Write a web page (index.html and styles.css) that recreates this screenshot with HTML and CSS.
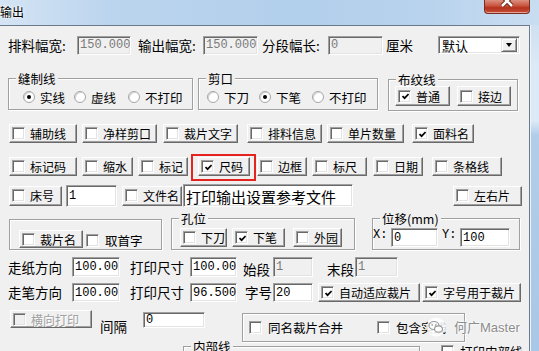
FILE: index.html
```html
<!DOCTYPE html>
<html lang="zh-CN">
<head>
  <meta charset="UTF-8">
  <meta name="viewport" content="width=device-width, initial-scale=1.0">
  <title>输出</title>
  <link rel="stylesheet" href="styles.css">
</head>
<body>

<div class="titlebar">
  <span class="title">输出</span>
  <div class="close">
    <svg width="16" height="10" viewBox="0 0 16 10">
      <path d="M3 -4 L13 6 M13 -4 L3 6" stroke="#6b2419" stroke-width="4.5"/>
      <path d="M3 -4 L13 6 M13 -4 L3 6" stroke="#fff" stroke-width="2.5"/>
    </svg>
  </div>
</div>

<div class="main">
  <div class="client">

    <div class="row r1">
      <span class="lbl w69">排料幅宽:</span>
      <span class="edit dis w54">150.000</span>
      <span class="lbl ml7 w65">输出幅宽:</span>
      <span class="edit dis w55">150.000</span>
      <span class="lbl ml4 w66">分段幅长:</span>
      <span class="edit dis w55">0</span>
      <span class="lbl ml3 w52">厘米</span>
      <div class="combo">
        <span class="combo-val">默认</span>
        <span class="combo-btn"><i class="tri"></i></span>
      </div>
    </div>

    <div class="row r2">
      <fieldset class="group w185">
        <legend>缝制线</legend>
        <div class="group-body pl14">
          <span class="radio"><i class="dot on"></i>实线</span>
          <span class="radio ml9"><i class="dot"></i>虚线</span>
          <span class="radio ml12"><i class="dot"></i>不打印</span>
        </div>
      </fieldset>
      <fieldset class="group ml5 w180">
        <legend>剪口</legend>
        <div class="group-body pl8">
          <span class="radio"><i class="dot"></i>下刀</span>
          <span class="radio ml10"><i class="dot on"></i>下笔</span>
          <span class="radio ml11"><i class="dot"></i>不打印</span>
        </div>
      </fieldset>
      <fieldset class="group grain ml10 w130">
        <legend>布纹线</legend>
        <div class="group-body top pl6">
          <span class="chk h20 w55"><i class="box"><svg class="tick" viewBox="0 0 7 7"><path d="M0.5 3 L2.6 5.2 L6.6 1"/></svg></i>普通</span>
          <span class="chk h20 ml7 w54"><i class="box"></i>接边</span>
        </div>
      </fieldset>
    </div>

    <div class="row r3">
      <span class="chk ml1 w68"><i class="box"></i>辅助线</span>
      <span class="chk ml5 w75"><i class="box"></i>净样剪口</span>
      <span class="chk ml6 w75"><i class="box"></i>裁片文字</span>
      <span class="chk ml9 w75"><i class="box"></i>排料信息</span>
      <span class="chk ml5 w77"><i class="box"></i>单片数量</span>
      <span class="chk ml8 w62"><i class="box"><svg class="tick" viewBox="0 0 7 7"><path d="M0.5 3 L2.6 5.2 L6.6 1"/></svg></i>面料名</span>
    </div>

    <div class="row r4">
      <span class="chk ml1 w68"><i class="box"></i>标记码</span>
      <span class="chk ml5 w51"><i class="box"></i>缩水</span>
      <span class="chk ml5 w50"><i class="box"></i>标记</span>
      <span class="chk marked ml10 w52"><i class="box"><svg class="tick" viewBox="0 0 7 7"><path d="M0.5 3 L2.6 5.2 L6.6 1"/></svg></i>尺码</span>
      <span class="chk ml7 w50"><i class="box"></i>边框</span>
      <span class="chk ml5 w55"><i class="box"></i>标尺</span>
      <span class="chk ml6 w50"><i class="box"></i>日期</span>
      <span class="chk ml9 w70"><i class="box"></i>条格线</span>
    </div>

    <div class="row r5">
      <span class="chk h20 ml1 w53"><i class="box"></i>床号</span>
      <span class="edit h22 ml4 w51">1</span>
      <span class="chk h20 ml5 w60"><i class="box"></i>文件名</span>
      <span class="edit h23 ml1 w170 cjk">打印输出设置参考文件</span>
      <span class="chk h20 ml100 w69"><i class="box"></i>左右片</span>
    </div>

    <div class="row r6">
      <div class="group plain-group ml1 w153">
        <span class="chk h18 w64"><i class="box"></i>裁片名</span>
        <span class="pchk ml3"><i class="box"></i>取首字</span>
      </div>
      <fieldset class="group ml9 w184">
        <legend>孔位</legend>
        <div class="group-body top pt3 pl8">
          <span class="chk w47"><i class="box"></i>下刀</span>
          <span class="chk ml5 w53"><i class="box"><svg class="tick" viewBox="0 0 7 7"><path d="M0.5 3 L2.6 5.2 L6.6 1"/></svg></i>下笔</span>
          <span class="chk ml8 w49"><i class="box"></i>外园</span>
        </div>
      </fieldset>
      <fieldset class="group ml17 w148">
        <legend>位移(mm)</legend>
        <div class="group-body top pt3">
          <span class="lbl mono w18">X:</span>
          <span class="edit w47">0</span>
          <span class="lbl mono ml4 w18">Y:</span>
          <span class="edit w50">100</span>
        </div>
      </fieldset>
    </div>

    <div class="row r7">
      <span class="lbl w64">走纸方向</span>
      <span class="edit h20 w48">100.00</span>
      <span class="lbl ml10 w60">打印尺寸</span>
      <span class="edit h20 w47">100.00</span>
      <span class="lbl low ml6 w30">始段</span>
      <span class="edit dis h20 w40">1</span>
      <span class="lbl low ml14 w28">末段</span>
      <span class="edit dis h20 w43">1</span>
    </div>

    <div class="row r8">
      <span class="lbl w64">走笔方向</span>
      <span class="edit w48">100.00</span>
      <span class="lbl ml10 w60">打印尺寸</span>
      <span class="edit w47">96.500</span>
      <span class="lbl ml8 w28">字号</span>
      <span class="edit w40">20</span>
      <span class="chk ml5 w102"><i class="box"><svg class="tick" viewBox="0 0 7 7"><path d="M0.5 3 L2.6 5.2 L6.6 1"/></svg></i>自动适应裁片</span>
      <span class="chk ml2 w99"><i class="box"><svg class="tick" viewBox="0 0 7 7"><path d="M0.5 3 L2.6 5.2 L6.6 1"/></svg></i>字号用于裁片</span>
    </div>

    <div class="row r9">
      <span class="chk off h18 ml2 w82"><i class="box"></i>横向打印</span>
      <span class="lbl gap-lbl ml8 w43">间隔</span>
      <span class="edit gap-edit h16 w62">0</span>
      <div class="group merge ml37 w223">
        <span class="pchk w128"><i class="box"></i>同名裁片合并</span>
        <span class="pchk"><i class="box"></i>包含实线</span>
      </div>
    </div>

    <div class="row r10">
      <fieldset class="group inner ml175 w237">
        <legend>内部线</legend>
      </fieldset>
      <span class="pchk tail ml21"><i class="box"></i>打印内部线</span>
    </div>

    <div class="watermark">
      <svg width="20" height="20" viewBox="0 0 20 20">
        <circle cx="10" cy="10" r="9.5" fill="#fff" opacity="0.85"/>
        <ellipse cx="8" cy="8.5" rx="5" ry="4" fill="none" stroke="#9a9a9a" stroke-width="1.2"/>
        <ellipse cx="12.5" cy="12" rx="4" ry="3.2" fill="#fff" stroke="#9a9a9a" stroke-width="1.2"/>
        <circle cx="6.3" cy="8" r="0.8" fill="#9a9a9a"/>
        <circle cx="9.7" cy="8" r="0.8" fill="#9a9a9a"/>
      </svg>
      <span class="wm-text">何广Master</span>
    </div>

  </div>
  <div class="side"></div>
</div>

</body>
</html>
```

FILE: styles.css
```css
* {
  box-sizing: border-box;
}

body {
  margin: 0;
  width: 539px;
  height: 351px;
  overflow: hidden;
  font-family: "Noto Sans CJK SC", "Noto Sans", sans-serif;
  font-size: 12.5px;
  line-height: 15px;
  color: #000;
  background: #b4cfea;
}

/* window chrome */

.titlebar {
  height: 25px;
  display: flex;
  justify-content: space-between;
  background: linear-gradient(90deg, #d4e4f4 0%, #bcd5ee 20%, #b2cfeb 55%, #b9d3ed 80%, #c9ddf1 100%);
}

.title {
  padding-top: 5px;
  font-size: 12px;
  line-height: 14px;
  text-shadow: 0 0 4px #fff, 0 0 2px #fff;
}

.close {
  width: 46px;
  height: 14px;
  margin-right: 9px;
  border: 1px solid #7a2d22;
  border-top: 0;
  border-radius: 0 0 4px 4px;
  background: linear-gradient(#dc9080, #c9533e 45%, #b5321e 60%, #c4513a);
  box-shadow: inset 0 -1px #e7a394;
  display: flex;
  justify-content: center;
}

.main {
  display: flex;
  height: 326px;
}

.client {
  position: relative;
  width: 530px;
  height: 326px;
  flex: none;
  overflow: hidden;
  padding: 10px 0 0 8px;
  background: #f0f0f0;
  border-top: 1px solid #6b7a8b;
  border-right: 1px solid #6b7a8b;
}

.side {
  flex: 1;
  border-left: 1px solid #eef4fb;
  background: linear-gradient(#cfe0f2 0, #dce9f6 40px, #dce9f6 96px, #b2cde9 110px, #a9c7e6 100%);
}

/* rows */

.row {
  display: flex;
  align-items: center;
}

.r1 { height: 18px; }
.r2 { margin-top: 18px; height: 40px; align-items: flex-start; }
.r3 { margin-top: 12px; height: 19px; }
.r4 { margin-top: 14px; height: 19px; }
.r5 { margin-top: 8px; height: 23px; }
.r6 { margin-top: 5px; height: 39px; align-items: flex-start; }
.r7 { margin-top: 6px; height: 20px; }
.r8 { margin-top: 6px; height: 19px; }
.r9 { margin-top: 8px; height: 30px; align-items: flex-start; }
.r10 { align-items: flex-start; }

/* labels */

.lbl {
  flex: none;
  white-space: nowrap;
  font-size: 13.5px;
}

.lbl.low {
  align-self: flex-end;
}

.mono {
  font-family: "Liberation Mono", monospace;
  font-size: 12px;
}

/* edit boxes */

.edit {
  flex: none;
  height: 19px;
  padding: 1px 2px 0;
  overflow: hidden;
  white-space: nowrap;
  background: #fff;
  border: 1px solid;
  border-color: #a0a0a0 #fff #fff #a0a0a0;
  box-shadow: inset 1px 1px #696969, inset -1px -1px #e3e3e3;
  font-family: "Liberation Mono", "Noto Sans CJK SC", monospace;
  font-size: 12px;
  line-height: 15px;
  display: flex;
  align-items: center;
}

.edit.cjk {
  font-family: "Noto Sans CJK SC", sans-serif;
  font-size: 15px;
}

.edit.dis {
  background: #f0f0f0;
  color: #7a7a7a;
}

/* combo box */

.combo {
  width: 82px;
  height: 18px;
  flex: none;
  display: flex;
  align-items: center;
  background: #fff;
  border: 1px solid;
  border-color: #a0a0a0 #fff #fff #a0a0a0;
  box-shadow: inset 1px 1px #696969, inset -1px -1px #e3e3e3;
  padding: 1px 2px 1px 2px;
  font-size: 13px;
}

.combo-val {
  flex: 1;
  padding-left: 1px;
}

.combo-btn {
  width: 16px;
  height: 14px;
  display: flex;
  align-items: center;
  justify-content: center;
  background: #f0f0f0;
  border: 1px solid;
  border-color: #e3e3e3 #696969 #696969 #e3e3e3;
  box-shadow: inset 1px 1px #fff, inset -1px -1px #a0a0a0;
}

.tri {
  width: 0;
  height: 0;
  border-left: 3.5px solid transparent;
  border-right: 3.5px solid transparent;
  border-top: 4px solid #000;
}

/* group boxes */

.group {
  flex: none;
  margin: 0;
  padding: 0;
  min-width: 0;
  border: 1px solid #a0a0a0;
  box-shadow: inset 1px 1px #fff, 1px 1px #fff;
}

.group legend {
  margin-left: 7px;
  padding: 0 2px;
  line-height: 13px;
  background: #f0f0f0;
}

.group.grain {
  margin-top: 1px;
}

.group-body {
  display: flex;
  align-items: center;
  height: 24px;
}

.group-body.top {
  align-items: flex-start;
}

.plain-group {
  margin-top: 7px;
  height: 31px;
  display: flex;
  align-items: flex-end;
  padding: 0 0 1px 9px;
}

.merge {
  margin-top: 3px;
  height: 29px;
  display: flex;
  align-items: center;
  padding-left: 6px;
}

.inner {
  height: 30px;
}

.gap-lbl {
  margin-top: 9px;
}

.gap-edit {
  margin-top: 2px;
}

.tail {
  margin-top: 4px;
}

/* radio buttons */

.radio {
  flex: none;
  display: flex;
  align-items: center;
  white-space: nowrap;
}

.dot {
  position: relative;
  width: 12px;
  height: 12px;
  margin-right: 5px;
  border-radius: 50%;
  background: #fff;
  border: 1px solid #a6a6a6;
  box-shadow: inset 1px 1px #d4d4d4;
}

.dot.on::after {
  content: "";
  position: absolute;
  left: 3px;
  top: 3px;
  width: 4px;
  height: 4px;
  border-radius: 50%;
  background: #000;
}

/* check boxes */

.chk {
  flex: none;
  display: flex;
  align-items: center;
  height: 19px;
  padding-left: 2px;
  white-space: nowrap;
  font-size: 12px;
  border: 1px solid;
  border-color: #fff #696969 #696969 #fff;
  box-shadow: inset -1px -1px #a0a0a0;
}

.pchk {
  flex: none;
  display: flex;
  align-items: center;
  white-space: nowrap;
}

.box {
  flex: none;
  width: 13px;
  height: 13px;
  margin-right: 5px;
  display: flex;
  align-items: center;
  justify-content: center;
  background: #fff;
  border: 1px solid;
  border-color: #a0a0a0 #fff #fff #a0a0a0;
  box-shadow: inset 1px 1px #696969, inset -1px -1px #e3e3e3;
}

.pchk .box {
  margin-right: 6px;
}

.tick {
  width: 7px;
  height: 7px;
  margin: 1px 0 0 1px;
}

.tick path {
  fill: none;
  stroke: #000;
  stroke-width: 1.7;
}

.chk.off {
  color: #a0a0a0;
  text-shadow: 1px 1px #fff;
}

.chk.off .box {
  background: #f0f0f0;
}

.chk.marked {
  position: relative;
}

.chk.marked::after {
  content: "";
  position: absolute;
  left: -8px;
  top: -4px;
  right: -7px;
  bottom: -6px;
  border: 2px solid #e5231f;
}

/* watermark over the dialog */

.watermark {
  position: absolute;
  left: 426px;
  top: 291px;
  display: flex;
  align-items: center;
  gap: 8px;
}

.wm-text {
  font-family: "Liberation Sans", "Noto Sans CJK SC", sans-serif;
  font-size: 13px;
  color: #8c8c8c;
  text-shadow: 0 0 2px #fff, 0 0 3px #fff;
}

/* sizes and spacing, kept last so they win over component defaults */

.w18 { width: 18px; } .w28 { width: 28px; } .w30 { width: 30px; }
.w40 { width: 40px; } .w43 { width: 43px; } .w47 { width: 47px; }
.w48 { width: 48px; } .w49 { width: 49px; } .w50 { width: 50px; }
.w51 { width: 51px; } .w52 { width: 52px; } .w53 { width: 53px; }
.w54 { width: 54px; } .w55 { width: 55px; } .w60 { width: 60px; }
.w62 { width: 62px; } .w64 { width: 64px; } .w65 { width: 65px; }
.w66 { width: 66px; } .w68 { width: 68px; } .w69 { width: 69px; }
.w70 { width: 70px; } .w75 { width: 75px; } .w77 { width: 77px; }
.w82 { width: 82px; } .w99 { width: 99px; } .w102 { width: 102px; }
.w128 { width: 128px; } .w130 { width: 130px; } .w148 { width: 148px; }
.w153 { width: 153px; } .w170 { width: 170px; } .w180 { width: 180px; }
.w184 { width: 184px; } .w185 { width: 185px; } .w223 { width: 223px; }
.w237 { width: 237px; }

.ml1 { margin-left: 1px; } .ml2 { margin-left: 2px; } .ml3 { margin-left: 3px; }
.ml4 { margin-left: 4px; } .ml5 { margin-left: 5px; } .ml6 { margin-left: 6px; }
.ml7 { margin-left: 7px; } .ml8 { margin-left: 8px; } .ml9 { margin-left: 9px; }
.ml10 { margin-left: 10px; } .ml11 { margin-left: 11px; } .ml12 { margin-left: 12px; }
.ml14 { margin-left: 14px; } .ml17 { margin-left: 17px; } .ml21 { margin-left: 21px; }
.ml37 { margin-left: 37px; } .ml100 { margin-left: 100px; } .ml175 { margin-left: 175px; }

.pl6 { padding-left: 6px; } .pl8 { padding-left: 8px; } .pl14 { padding-left: 14px; }
.pt3 { padding-top: 3px; }

.h16 { height: 16px; } .h18 { height: 18px; } .h20 { height: 20px; }
.h22 { height: 22px; } .h23 { height: 23px; }
```
